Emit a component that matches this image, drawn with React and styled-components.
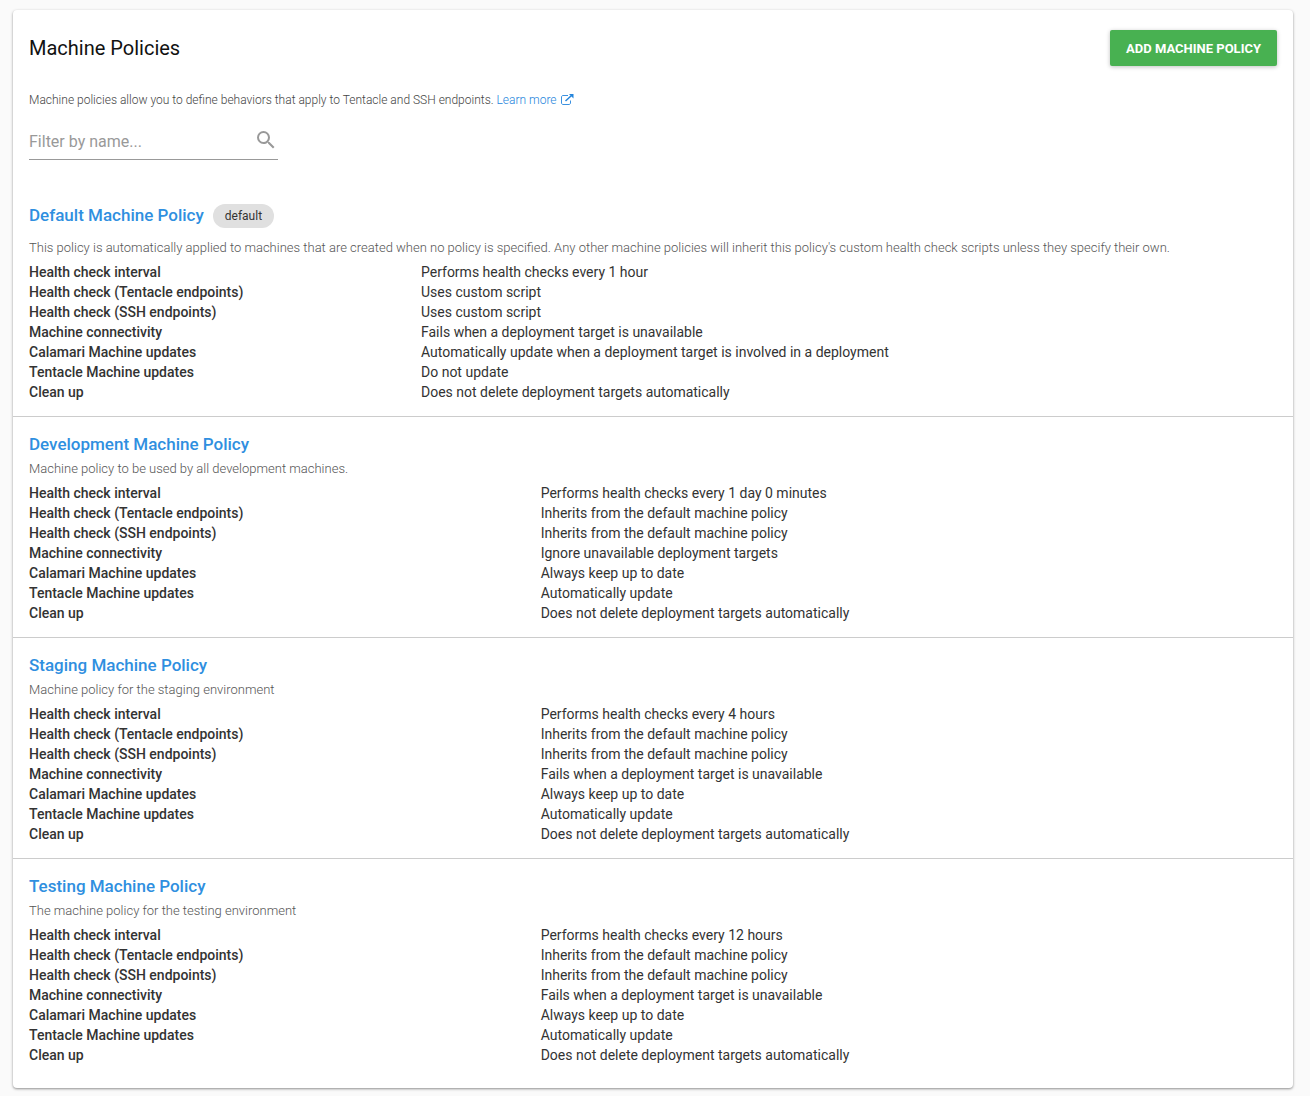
import React from 'react';
import styled, { createGlobalStyle } from 'styled-components';

const Global = createGlobalStyle`
  * { box-sizing: border-box; }
  body {
    margin: 0;
    background: #fafafa;
    color: #333;
    font-family: Roboto, "Open Sans", sans-serif;
    font-size: 14px;
    line-height: 20px;
  }
`;

const Page = styled.main`padding: 10px 17px 8px 13px;`;

const Paper = styled.section`
  background: #fff;
  border-radius: 4px;
  padding-bottom: 9px;
  box-shadow: 0 1px 3px rgba(0, 0, 0, 0.3), 0 1px 2px rgba(0, 0, 0, 0.16);
`;

const Header = styled.header`
  display: flex;
  align-items: center;
  justify-content: space-between;
  padding: 20px 16px 24px;
`;

const Title = styled.h1`
  margin: 0;
  font-size: 20px;
  line-height: 28px;
  font-weight: 400;
  color: #111;
`;

const AddButton = styled.button`
  height: 36px;
  padding: 0 16px;
  border: 0;
  border-radius: 2px;
  background: #48b151;
  color: #fff;
  font-family: inherit;
  font-size: 13px;
  font-weight: 700;
  text-transform: uppercase;
  cursor: pointer;
  box-shadow: 0 1px 4px rgba(0, 0, 0, 0.25);
`;

const Intro = styled.p`
  margin: 0;
  padding: 0 16px;
  font-size: 12px;
  font-weight: 300;
  color: #444;
`;

const LearnLink = styled.a`
  display: inline-flex;
  align-items: center;
  gap: 4px;
  color: #2585dc;
  text-decoration: none;
`;

const Filter = styled.label`
  display: flex;
  align-items: center;
  width: 249px;
  height: 40px;
  margin: 10px 16px 28px;
  border-bottom: 1px solid #999;
`;

const FilterInput = styled.input`
  flex: 1;
  min-width: 0;
  height: 100%;
  padding: 4px 0 0;
  border: 0;
  outline: 0;
  background: transparent;
  font-family: inherit;
  font-size: 16px;
  line-height: 24px;
  color: #333;
  &::placeholder { color: #999; opacity: 1; }
`;

const Policy = styled.article`
  padding: 16px 16px 14px;
  & + & { border-top: 1px solid #ccc; }
`;

const PolicyHead = styled.div`
  display: flex;
  align-items: flex-start;
  gap: 9px;
  margin-bottom: ${(p) => (p.$roomy ? '10px' : '4px')};
`;

const PolicyName = styled.h2`
  margin: 0;
  font-size: 17px;
  line-height: 22px;
  font-weight: 500;
  a { color: #2f8fe0; text-decoration: none; }
`;

const Chip = styled.span`
  padding: 0 12px;
  border-radius: 12px;
  background: #e0e0e0;
  font-size: 12px;
  line-height: 24px;
`;

const Description = styled.p`
  margin: 0 0 4px;
  font-size: 13px;
  font-weight: 300;
  color: #555;
`;

const Facts = styled.table`
  width: 100%;
  table-layout: fixed;
  border-collapse: collapse;
  th, td { padding: 0; text-align: left; vertical-align: top; }
  th { width: ${(p) => p.$labelWidth}; font-weight: 500; }
`;

const labels = [
  'Health check interval',
  'Health check (Tentacle endpoints)',
  'Health check (SSH endpoints)',
  'Machine connectivity',
  'Calamari Machine updates',
  'Tentacle Machine updates',
  'Clean up',
];

const inherits = 'Inherits from the default machine policy';
const unavailable = 'Fails when a deployment target is unavailable';
const keeps = 'Does not delete deployment targets automatically';

const policies = [
  {
    name: 'Default Machine Policy',
    isDefault: true,
    description:
      "This policy is automatically applied to machines that are created when no policy is specified. Any other machine policies will inherit this policy's custom health check scripts unless they specify their own.",
    values: ['Performs health checks every 1 hour', 'Uses custom script', 'Uses custom script', unavailable,
      'Automatically update when a deployment target is involved in a deployment', 'Do not update', keeps],
  },
  {
    name: 'Development Machine Policy',
    description: 'Machine policy to be used by all development machines.',
    values: ['Performs health checks every 1 day 0 minutes', inherits, inherits,
      'Ignore unavailable deployment targets', 'Always keep up to date', 'Automatically update', keeps],
  },
  {
    name: 'Staging Machine Policy',
    description: 'Machine policy for the staging environment',
    values: ['Performs health checks every 4 hours', inherits, inherits, unavailable,
      'Always keep up to date', 'Automatically update', keeps],
  },
  {
    name: 'Testing Machine Policy',
    description: 'The machine policy for the testing environment',
    values: ['Performs health checks every 12 hours', inherits, inherits, unavailable,
      'Always keep up to date', 'Automatically update', keeps],
  },
];

function ExternalIcon() {
  return (
    <svg width="13" height="12" viewBox="0 0 13 12" fill="none" stroke="currentColor" aria-hidden="true">
      <path d="M7 1.500H2C1.200 1.500.500 2.200.500 3v6c0 .8.7 1.500 1.500 1.500h6c.8 0 1.500-.7 1.500-1.500V6.500" strokeWidth="0.9" />
      <path d="M4.500 7 10.500 1.500" strokeWidth="1.500" />
      <path d="M8 0h4.500v4.500z" fill="currentColor" stroke="none" />
    </svg>
  );
}

function SearchIcon() {
  return (
    <svg width="24" height="24" viewBox="0 0 24 24" fill="#999" aria-hidden="true">
      <path d="M15.5 14h-.79l-.28-.27A6.471 6.471 0 0 0 16 9.5 6.5 6.5 0 1 0 9.5 16c1.61 0 3.09-.59 4.23-1.57l.27.28v.79l5 4.99L20.49 19l-4.99-5zm-6 0C7.01 14 5 11.99 5 9.5S7.01 5 9.5 5 14 7.01 14 9.5 11.99 14 9.5 14z" />
    </svg>
  );
}

export default function App() {
  return (
    <Page>
      <Global />
      <Paper>
        <Header>
          <Title>Machine Policies</Title>
          <AddButton type="button">Add machine policy</AddButton>
        </Header>
        <Intro>
          Machine policies allow you to define behaviors that apply to Tentacle and SSH endpoints.{' '}
          <LearnLink href="#learn">Learn more <ExternalIcon /></LearnLink>
        </Intro>
        <Filter>
          <FilterInput type="text" placeholder="Filter by name..." aria-label="Filter by name" />
          <SearchIcon />
        </Filter>
        {policies.map((p) => (
          <Policy key={p.name}>
            <PolicyHead $roomy={p.isDefault}>
              <PolicyName><a href="#policy">{p.name}</a></PolicyName>
              {p.isDefault && <Chip>default</Chip>}
            </PolicyHead>
            <Description>{p.description}</Description>
            <Facts $labelWidth={p.isDefault ? '392px' : '41%'}>
              <tbody>
                {labels.map((label, i) => (
                  <tr key={label}>
                    <th scope="row">{label}</th>
                    <td>{p.values[i]}</td>
                  </tr>
                ))}
              </tbody>
            </Facts>
          </Policy>
        ))}
      </Paper>
    </Page>
  );
}
